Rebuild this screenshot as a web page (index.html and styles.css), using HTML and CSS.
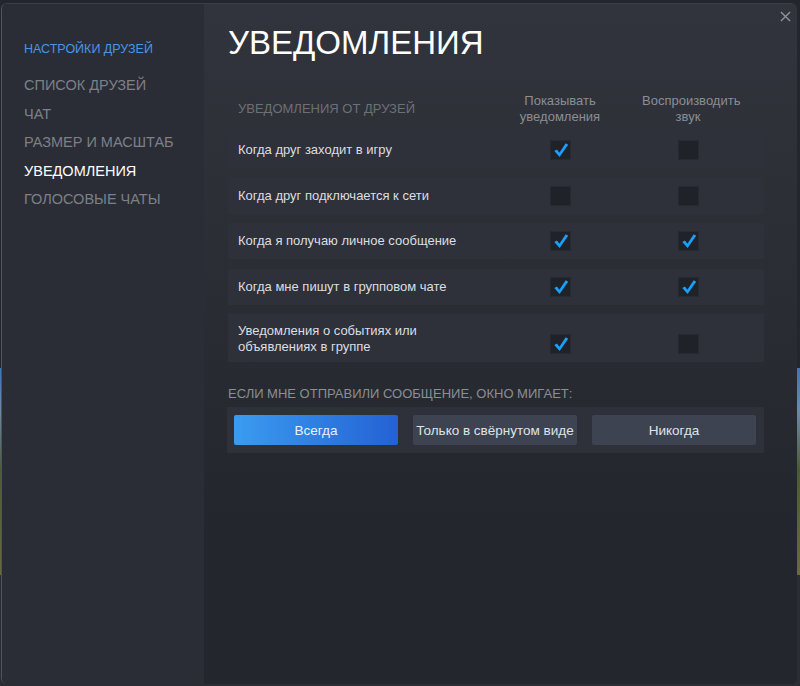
FILE: index.html
```html
<!DOCTYPE html>
<html lang="ru">
<head>
<meta charset="utf-8">
<title>Настройки друзей</title>
<link rel="stylesheet" href="styles.css">
</head>
<body>
<div class="window">
  <nav class="sidebar">
    <div class="side-title">НАСТРОЙКИ ДРУЗЕЙ</div>
    <ul class="side-list">
      <li>СПИСОК ДРУЗЕЙ</li>
      <li>ЧАТ</li>
      <li>РАЗМЕР И МАСШТАБ</li>
      <li class="active">УВЕДОМЛЕНИЯ</li>
      <li>ГОЛОСОВЫЕ ЧАТЫ</li>
    </ul>
  </nav>
  <main class="content">
    <h1 class="title">УВЕДОМЛЕНИЯ</h1>
    <div class="table">
      <div class="thead">
        <div class="th-label">УВЕДОМЛЕНИЯ ОТ ДРУЗЕЙ</div>
        <div class="th-col">Показывать уведомления</div>
        <div class="th-col">Воспроизводить звук</div>
      </div>
      <div class="row">
        <div class="row-text">Когда друг заходит в игру</div>
        <div class="cell"><span class="box checked"><svg viewBox="0 0 20 20"><path d="M3.3 10.9 L5.9 9.4 L8.4 12.7 L14.7 3.3 L17.2 4.8 L8.6 16.9 Z"/></svg></span></div>
        <div class="cell"><span class="box"></span></div>
      </div>
      <div class="row">
        <div class="row-text">Когда друг подключается к сети</div>
        <div class="cell"><span class="box"></span></div>
        <div class="cell"><span class="box"></span></div>
      </div>
      <div class="row">
        <div class="row-text">Когда я получаю личное сообщение</div>
        <div class="cell"><span class="box checked"><svg viewBox="0 0 20 20"><path d="M3.3 10.9 L5.9 9.4 L8.4 12.7 L14.7 3.3 L17.2 4.8 L8.6 16.9 Z"/></svg></span></div>
        <div class="cell"><span class="box checked"><svg viewBox="0 0 20 20"><path d="M3.3 10.9 L5.9 9.4 L8.4 12.7 L14.7 3.3 L17.2 4.8 L8.6 16.9 Z"/></svg></span></div>
      </div>
      <div class="row">
        <div class="row-text">Когда мне пишут в групповом чате</div>
        <div class="cell"><span class="box checked"><svg viewBox="0 0 20 20"><path d="M3.3 10.9 L5.9 9.4 L8.4 12.7 L14.7 3.3 L17.2 4.8 L8.6 16.9 Z"/></svg></span></div>
        <div class="cell"><span class="box checked"><svg viewBox="0 0 20 20"><path d="M3.3 10.9 L5.9 9.4 L8.4 12.7 L14.7 3.3 L17.2 4.8 L8.6 16.9 Z"/></svg></span></div>
      </div>
      <div class="row tall">
        <div class="row-text narrow">Уведомления о событиях или объявлениях в группе</div>
        <div class="cell"><span class="box checked"><svg viewBox="0 0 20 20"><path d="M3.3 10.9 L5.9 9.4 L8.4 12.7 L14.7 3.3 L17.2 4.8 L8.6 16.9 Z"/></svg></span></div>
        <div class="cell"><span class="box"></span></div>
      </div>
    </div>
    <div class="section-label">ЕСЛИ МНЕ ОТПРАВИЛИ СООБЩЕНИЕ, ОКНО МИГАЕТ:</div>
    <div class="btn-group">
      <button class="btn selected">Всегда</button>
      <button class="btn">Только в свёрнутом виде</button>
      <button class="btn">Никогда</button>
    </div>
  </main>
  <button class="close" aria-label="Закрыть"><svg viewBox="0 0 12 12"><path d="M1 1 L11 11 M11 1 L1 11"/></svg></button>
</div>
</body>
</html>
```
FILE: styles.css
```css
* { box-sizing: border-box; }
html, body { margin: 0; padding: 0; }
body {
  width: 800px;
  height: 686px;
  overflow: hidden;
  background: linear-gradient(to bottom, #23262c 0, #23262c 368px, #3c74c0 368px, #6c8aa8 410px, #4d5a3a 470px, #6b6a38 575px, #2a2d33 575px);
  font-family: "Liberation Sans", Arial, sans-serif;
  padding: 3px 3px 2px 1px;
}
.window {
  position: relative;
  display: flex;
  width: 796px;
  height: 681px;
  border-left: 1px solid #50545b;
  border-top: 1px solid #3a3e45;
  border-radius: 6px;
  overflow: hidden;
  background: #24272e;
}
.sidebar {
  width: 202px;
  flex: none;
  background: #2a2d35;
  padding: 37px 0 0 22px;
}
.side-title {
  font-size: 12.5px;
  line-height: 16px;
  color: #4797e6;
}
.side-list {
  list-style: none;
  margin: 14px 0 0;
  padding: 0;
}
.side-list li {
  font-size: 14.5px;
  line-height: 28.5px;
  color: #7d8087;
}
.side-list li.active { color: #ffffff; }
.content {
  flex: 1;
  padding: 19px 33px 0 24px;
  background: linear-gradient(to bottom, #31343c 0, #2a2d34 280px, #23262d 520px, #23262d 100%);
}
.title {
  margin: 0;
  font-size: 33px;
  line-height: 40px;
  font-weight: normal;
  letter-spacing: 0;
  color: #ffffff;
}
.table {
  margin-top: 30px;
  display: flex;
  flex-direction: column;
  gap: 9.5px;
}
.thead, .row {
  display: grid;
  grid-template-columns: 1fr 128px 128px;
  padding: 0 12px 0 10px;
}
.thead {
  align-items: center;
  margin-bottom: -2.5px;
}
.th-label {
  font-size: 13px;
  line-height: 16px;
  color: #6c7077;
}
.th-col {
  font-size: 13px;
  line-height: 16px;
  color: #8a8e95;
  text-align: center;
  padding: 0 18px;
}
.row {
  background: #2e3139;
  padding-top: 8px;
  padding-bottom: 8px;
  align-items: center;
}
.row.tall { padding-bottom: 7px; padding-top: 9px; }
.row.tall .cell { margin-bottom: 1px; }
.row-text {
  font-size: 13px;
  line-height: 16px;
  color: #dcdee2;
}
.row-text.narrow { padding-right: 30px; }
.cell {
  align-self: end;
  display: flex;
  justify-content: center;
}
.box {
  display: block;
  width: 21px;
  height: 20px;
  background: #1f2228;
  border-radius: 2px;
  box-shadow: inset 0 0 0 1px #272a30;
}
.box svg {
  display: block;
  width: 20px;
  height: 20px;
  margin-left: 1px;
  fill: #1a9fff;
}
.section-label {
  margin-top: 24px;
  font-size: 13px;
  line-height: 16px;
  color: #8a8e95;
}
.btn-group {
  margin-top: 5px;
  margin-left: -1px;
  display: flex;
  gap: 15px;
  padding: 8px 8px 8px 7px;
  background: #2e3139;
}
.btn {
  flex: 1;
  height: 30px;
  border: none;
  border-radius: 2px;
  background: #3d4350;
  color: #dfe3e8;
  font-family: "Liberation Sans", Arial, sans-serif;
  font-size: 13.5px;
  padding: 0;
}
.btn.selected {
  background: linear-gradient(to right, #3a9cf0, #2461d4);
  color: #eaf2fc;
}
.close {
  position: absolute;
  top: 6px;
  right: 5px;
  width: 12px;
  height: 12px;
  padding: 0;
  border: none;
  background: none;
}
.close svg {
  display: block;
  width: 11px;
  height: 11px;
  stroke: #8d939a;
  stroke-width: 1.5;
  fill: none;
}
```
